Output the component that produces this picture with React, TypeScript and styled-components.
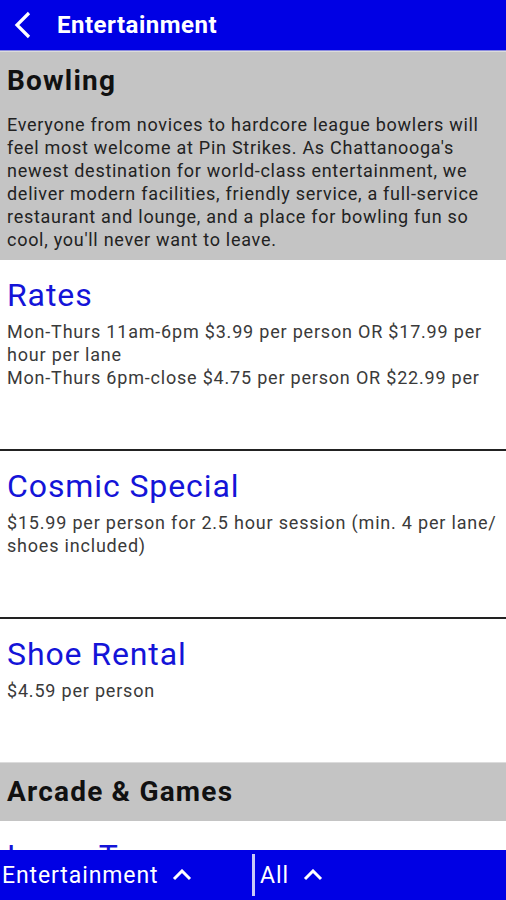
import React from 'react';
import styled, { createGlobalStyle } from 'styled-components';

const GlobalStyle = createGlobalStyle`
  html, body {
    margin: 0;
    padding: 0;
    background: #ffffff;
    font-family: Roboto, 'Liberation Sans', sans-serif;
  }
`;

const Screen = styled.div`
  height: 900px;
  width: 506px;
  display: flex;
  flex-direction: column;
  overflow: hidden;
`;

const TopBar = styled.header`
  height: 50px;
  flex-shrink: 0;
  background: #0000e4;
  display: flex;
  align-items: center;
  gap: 21px;
  padding-left: 12px;
  color: #ffffff;
  border-bottom: 1px solid #8a8ae0;
`;

const TopTitle = styled.h1`
  margin: 0;
  font-size: 24px;
  font-weight: 700;
  letter-spacing: 0.5px;
`;

const Content = styled.main`
  flex: 1;
  overflow: hidden;
`;

const CategoryBlock = styled.section`
  background: #c4c4c4;
  padding: 9px 7px;
  border-top: 1px solid #dcdcdc;
`;

const CategoryTitle = styled.h2`
  margin: 0;
  font-size: 28px;
  font-weight: 700;
  line-height: 40px;
  letter-spacing: 1.2px;
  color: #111111;
`;

const CategoryText = styled.p`
  margin: 12px 0 0;
  font-size: 18px;
  line-height: 23px;
  letter-spacing: 0.72px;
  color: #222222;
`;

const Item = styled.article<{ $divider: boolean }>`
  padding: 14px 7px 60px;
  border-bottom: ${(p) => (p.$divider ? '2px solid #222222' : 'none')};
`;

const ItemTitle = styled.h3`
  margin: 0;
  font-size: 32px;
  font-weight: 400;
  line-height: 42px;
  letter-spacing: 0.9px;
  color: #1414d8;
`;

const ItemText = styled.p`
  margin: 4px 0 0;
  font-size: 18px;
  line-height: 23px;
  letter-spacing: 0.8px;
  color: #3a3a3a;
  white-space: pre-line;
`;

const BottomBar = styled.footer`
  height: 50px;
  flex-shrink: 0;
  background: #0000e4;
  display: flex;
  align-items: center;
  color: #ffffff;
`;

const Picker = styled.div<{ $width?: number }>`
  display: flex;
  align-items: center;
  gap: 14px;
  width: ${(p) => (p.$width ? `${p.$width}px` : 'auto')};
  font-size: 23px;
  letter-spacing: 0.9px;
`;

const PickerLabel = styled.span<{ $indent?: number }>`
  margin-left: ${(p) => p.$indent ?? 0}px;
`;

const Divider = styled.div`
  width: 3px;
  height: 42px;
  background: #c8c8f8;
  margin-right: 5px;
`;

const ChevronUp = () => (
  <svg width="20" height="12" viewBox="0 0 20 12">
    <polyline points="2,10 10,2 18,10" fill="none" stroke="#fff" strokeWidth="3" />
  </svg>
);

const BackIcon = () => (
  <svg width="24" height="30" viewBox="0 0 24 30">
    <polyline points="17,3 5,15 17,27" fill="none" stroke="#fff" strokeWidth="3.2" />
  </svg>
);

type Entry = { title: string; text: string };

const bowling: Entry[] = [
  {
    title: 'Rates',
    text:
      'Mon-Thurs 11am-6pm $3.99 per person OR $17.99 per hour per lane\nMon-Thurs 6pm-close $4.75 per person OR $22.99 per',
  },
  {
    title: 'Cosmic Special',
    text: '$15.99 per person for 2.5 hour session (min. 4 per lane/ shoes included)',
  },
  { title: 'Shoe Rental', text: '$4.59 per person' },
];

export default function App() {
  return (
    <Screen>
      <GlobalStyle />
      <TopBar>
        <BackIcon />
        <TopTitle>Entertainment</TopTitle>
      </TopBar>
      <Content>
        <CategoryBlock>
          <CategoryTitle>Bowling</CategoryTitle>
          <CategoryText>
            Everyone from novices to hardcore league bowlers will feel most welcome at Pin Strikes.
            As Chattanooga's newest destination for world-class entertainment, we deliver modern
            facilities, friendly service, a full-service restaurant and lounge, and a place for
            bowling fun so cool, you'll never want to leave.
          </CategoryText>
        </CategoryBlock>
        {bowling.map((el, index) => (
          <Item key={index} $divider={index < bowling.length - 1}>
            <ItemTitle>{el.title}</ItemTitle>
            <ItemText>{el.text}</ItemText>
          </Item>
        ))}
        <CategoryBlock>
          <CategoryTitle>Arcade &amp; Games</CategoryTitle>
        </CategoryBlock>
        <Item $divider={false}>
          <ItemTitle>Laser Tag</ItemTitle>
        </Item>
      </Content>
      <BottomBar>
        <Picker $width={252}>
          <PickerLabel $indent={2}>Entertainment</PickerLabel>
          <ChevronUp />
        </Picker>
        <Divider />
        <Picker>
          <PickerLabel>All</PickerLabel>
          <ChevronUp />
        </Picker>
      </BottomBar>
    </Screen>
  );
}
